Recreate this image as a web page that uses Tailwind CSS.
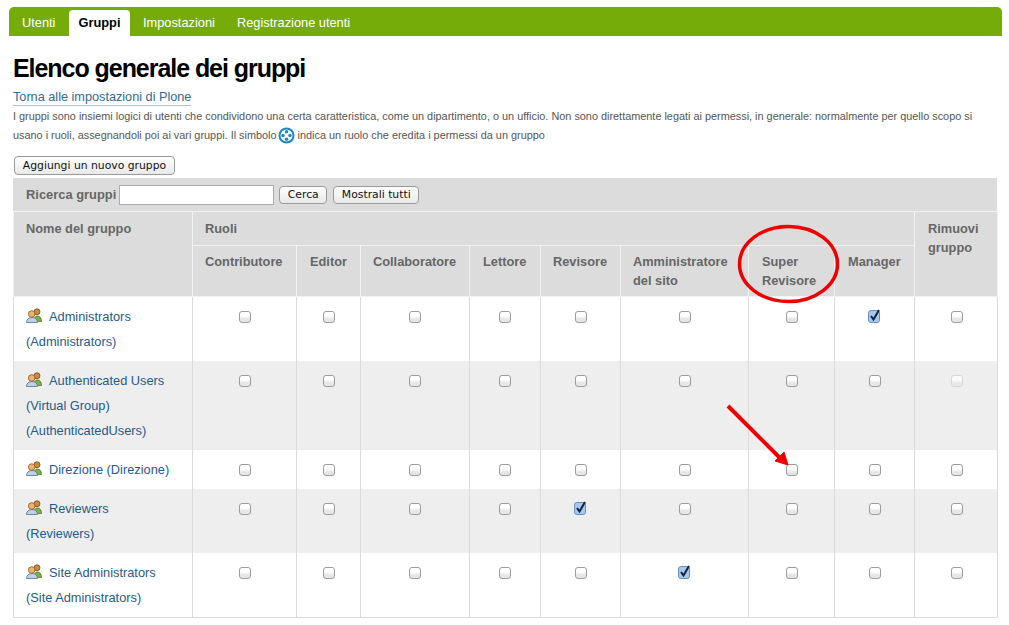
<!DOCTYPE html>
<html lang="it">

<head>
    <meta charset="UTF-8">
    <meta name="viewport" content="width=device-width, initial-scale=1.0">
    <script src="https://cdn.jsdelivr.net/npm/@tailwindcss/browser@4"></script>
    <title>Elenco generale dei gruppi</title>
</head>

<body class="bg-white font-['Liberation_Sans',Arial,sans-serif] text-[#4a4a4a]">
    <svg class="hidden">
        <symbol id="people" viewBox="0 0 16 15">
            <path d="M8 13.500c0-3.500 1-5.500 3.500-5.500s4 2 4 5.500z" fill="#7fb23c" stroke="#4f7a1e" stroke-width=".8"/>
            <circle cx="11" cy="3.800" r="3" fill="#c98a3c" stroke="#6e4719" stroke-width=".8"/>
            <path d="M.5 14.500c0-3 2-5 5.500-5s5.500 2 5.500 5z" fill="#bcd2e8" stroke="#55708c" stroke-width=".8"/>
            <circle cx="5.700" cy="6" r="3.300" fill="#eeb071" stroke="#8a5a24" stroke-width=".8"/>
        </symbol>
        <symbol id="checked" viewBox="0 0 13 14">
            <rect x=".5" y="1.500" width="11" height="12" rx="2.500" fill="#a9c8ef" stroke="#6d8fbc"/>
            <path d="M3 7l2.500 3.500L11 1" fill="none" stroke="#0c2340" stroke-width="2"/>
        </symbol>
    </svg>

    <div class="relative h-[625px] w-[1009px] overflow-hidden">

        <!-- tabs -->
        <nav class="mx-[9px] mt-[7px] flex h-[29px] w-[993px] items-end rounded-t-[5px] bg-[#76ac09] pl-[13px] text-[12.8px] text-white">
            <a class="flex h-[26px] w-[47px] items-center pb-[1px]">Utenti</a>
            <a class="flex h-[26px] w-[61px] items-center justify-center rounded-t-[4px] bg-white pb-[1px] font-bold text-black">Gruppi</a>
            <a class="ml-[13px] flex h-[26px] w-[94px] items-center pb-[1px]">Impostazioni</a>
            <a class="flex h-[26px] items-center pb-[1px]">Registrazione utenti</a>
        </nav>

        <main class="px-[13px]">
            <h1 class="mt-[15px] text-[25px] leading-[34px] font-bold tracking-[-1.05px] text-black">Elenco generale dei gruppi</h1>
            <a class="mt-[4px] block w-fit border-b border-[#b5bfc7] text-[12.7px] leading-[16px] text-[#2f6a96]">Torna alle impostazioni di Plone</a>
            <p class="mt-[1px] w-[975px] text-[10.88px] leading-[19px] text-[#555]">
                I gruppi sono insiemi logici di utenti che condividono una certa caratteristica, come un dipartimento, o un ufficio. Non sono direttamente legati ai permessi, in generale: normalmente per quello scopo si<br>
                usano i ruoli, assegnandoli poi ai vari gruppi. Il simbolo<svg class="mr-[3px] ml-[1px] inline-block align-[-5px]" width="17" height="17" viewBox="0 0 17 17">
                    <circle cx="8.500" cy="8.500" r="7" fill="white" stroke="#1a86c4" stroke-width="2"/>
                    <circle cx="8.500" cy="4.800" r="1.700" fill="#1a86c4"/>
                    <circle cx="5" cy="8.500" r="1.700" fill="#1a86c4"/>
                    <circle cx="12" cy="8.500" r="1.700" fill="#1a86c4"/>
                    <circle cx="8.500" cy="12.200" r="1.700" fill="#1a86c4"/>
                </svg>indica un ruolo che eredita i permessi da un gruppo
            </p>

            <button class="mt-[11px] ml-[1px] block h-[19px] w-[161px] rounded-[4px] border border-[#9a9a9a] bg-linear-to-b from-white to-[#e9e9e9] font-['DejaVu_Sans',sans-serif] text-[10.8px] leading-[15px] text-[#111]">Aggiungi un nuovo gruppo</button>

            <div class="mt-[3px] flex h-[33px] w-[984px] items-center bg-[#dcdcdc] pl-[13px]">
                <span class="text-[12.9px] font-bold text-[#666]">Ricerca gruppi</span>
                <input type="text" class="ml-[3px] h-[20px] w-[155px] border border-[#aaa] bg-white">
                <button class="ml-[5px] h-[18px] w-[48px] rounded-[4px] border border-[#9a9a9a] bg-linear-to-b from-white to-[#e9e9e9] font-['DejaVu_Sans',sans-serif] text-[10.8px] leading-[15px] text-[#111]">Cerca</button>
                <button class="ml-[6px] h-[18px] w-[86px] rounded-[4px] border border-[#9a9a9a] bg-linear-to-b from-white to-[#e9e9e9] font-['DejaVu_Sans',sans-serif] text-[10.8px] leading-[15px] text-[#111]">Mostrali tutti</button>
            </div>

            <table class="w-[984px] table-fixed border-collapse text-[12.8px] leading-[25.4px] text-[#1f5a8c] [&_td]:border-x [&_td]:border-[#dcdcdc] [&_td]:pt-[7px] [&_td]:align-top [&_td:not(:first-child)]:pt-[14px] [&_td:not(:first-child)]:text-center [&_td:first-child]:pl-[12px] [&_td:last-child]:pl-[2px] [&_td_input]:size-[12px] [&_td_input]:appearance-none [&_td_input]:rounded-[3px] [&_td_input]:border [&_td_input]:border-[#9c9c9c] [&_td_input]:bg-linear-to-b [&_td_input]:from-white [&_td_input]:from-40% [&_td_input]:to-[#e6e6e6] [&_td_input]:to-70% [&_td_input]:align-top [&_td_input:disabled]:border-[#cfcfcf] [&_td_input:disabled]:opacity-70 [&_th]:border [&_th]:border-[#f2f2f2] [&_th]:bg-[#dcdcdc] [&_th]:pl-[12px] [&_th]:align-top [&_th]:text-left [&_th]:font-bold [&_th]:text-[#666]">
                <colgroup>
                    <col class="w-[179px]">
                    <col class="w-[104px]">
                    <col class="w-[64px]">
                    <col class="w-[109px]">
                    <col class="w-[71px]">
                    <col class="w-[80px]">
                    <col class="w-[128px]">
                    <col class="w-[86px]">
                    <col class="w-[80px]">
                    <col class="w-[83px]">
                </colgroup>
                <thead>
                    <tr class="h-[34px]">
                        <th rowspan="2" class="pt-[4px] leading-[25px]">Nome del gruppo</th>
                        <th colspan="8" class="pt-[4px] leading-[25px]">Ruoli</th>
                        <th rowspan="2" class="pt-[7px] pl-[13px]! leading-[19px]">Rimuovi gruppo</th>
                    </tr>
                    <tr class="h-[51px] leading-[19px]">
                        <th class="pt-[6px]">Contributore</th>
                        <th class="pt-[6px] pl-[13px]!">Editor</th>
                        <th class="pt-[6px]">Collaboratore</th>
                        <th class="pt-[6px] pl-[13px]!">Lettore</th>
                        <th class="pt-[6px]">Revisore</th>
                        <th class="pt-[6px]">Amministratore<br>del sito</th>
                        <th class="pt-[6px] pl-[13px]!">Super<br>Revisore</th>
                        <th class="pt-[6px] pl-[13px]!">Manager</th>
                    </tr>
                </thead>
                <tbody>
                    <tr class="h-[64px] bg-white">
                        <td><svg class="mr-[7px] inline-block align-[-2px]" width="16" height="15"><use href="#people"/></svg>Administrators<br>(Administrators)</td>
                        <td><input type="checkbox"></td>
                        <td><input type="checkbox"></td>
                        <td><input type="checkbox"></td>
                        <td><input type="checkbox"></td>
                        <td><input type="checkbox"></td>
                        <td><input type="checkbox"></td>
                        <td><input type="checkbox"></td>
                        <td><svg class="-mt-[2px] inline-block align-top" width="13" height="14"><use href="#checked"/></svg></td>
                        <td><input type="checkbox"></td>
                    </tr>
                    <tr class="h-[89px] bg-[#eeeeee]">
                        <td><svg class="mr-[7px] inline-block align-[-2px]" width="16" height="15"><use href="#people"/></svg>Authenticated Users<br>(Virtual Group)<br>(AuthenticatedUsers)</td>
                        <td><input type="checkbox"></td>
                        <td><input type="checkbox"></td>
                        <td><input type="checkbox"></td>
                        <td><input type="checkbox"></td>
                        <td><input type="checkbox"></td>
                        <td><input type="checkbox"></td>
                        <td><input type="checkbox"></td>
                        <td><input type="checkbox"></td>
                        <td><input type="checkbox" disabled></td>
                    </tr>
                    <tr class="h-[39px] bg-white">
                        <td><svg class="mr-[7px] inline-block align-[-2px]" width="16" height="15"><use href="#people"/></svg>Direzione (Direzione)</td>
                        <td><input type="checkbox"></td>
                        <td><input type="checkbox"></td>
                        <td><input type="checkbox"></td>
                        <td><input type="checkbox"></td>
                        <td><input type="checkbox"></td>
                        <td><input type="checkbox"></td>
                        <td><input type="checkbox"></td>
                        <td><input type="checkbox"></td>
                        <td><input type="checkbox"></td>
                    </tr>
                    <tr class="h-[64px] bg-[#eeeeee]">
                        <td><svg class="mr-[7px] inline-block align-[-2px]" width="16" height="15"><use href="#people"/></svg>Reviewers<br>(Reviewers)</td>
                        <td><input type="checkbox"></td>
                        <td><input type="checkbox"></td>
                        <td><input type="checkbox"></td>
                        <td><input type="checkbox"></td>
                        <td><svg class="-mt-[2px] inline-block align-top" width="13" height="14"><use href="#checked"/></svg></td>
                        <td><input type="checkbox"></td>
                        <td><input type="checkbox"></td>
                        <td><input type="checkbox"></td>
                        <td><input type="checkbox"></td>
                    </tr>
                    <tr class="h-[65px] border-b border-[#dcdcdc] bg-white">
                        <td><svg class="mr-[7px] inline-block align-[-2px]" width="16" height="15"><use href="#people"/></svg>Site Administrators<br>(Site Administrators)</td>
                        <td><input type="checkbox"></td>
                        <td><input type="checkbox"></td>
                        <td><input type="checkbox"></td>
                        <td><input type="checkbox"></td>
                        <td><input type="checkbox"></td>
                        <td><svg class="-mt-[2px] inline-block align-top" width="13" height="14"><use href="#checked"/></svg></td>
                        <td><input type="checkbox"></td>
                        <td><input type="checkbox"></td>
                        <td><input type="checkbox"></td>
                    </tr>
                </tbody>
            </table>
        </main>

        <!-- red annotations drawn on top of the screenshot -->
        <svg class="pointer-events-none absolute top-0 left-0" width="1009" height="625" viewBox="0 0 1009 625">
            <ellipse cx="788.500" cy="264" rx="49" ry="37.500" fill="none" stroke="#ee0000" stroke-width="3.500"/>
            <path d="M728 406L781 459" stroke="#ee0000" stroke-width="4"/>
            <path d="M788 465L775 461L784 452z" fill="#ee0000" stroke="#ee0000"/>
        </svg>
    </div>
</body>

</html>
